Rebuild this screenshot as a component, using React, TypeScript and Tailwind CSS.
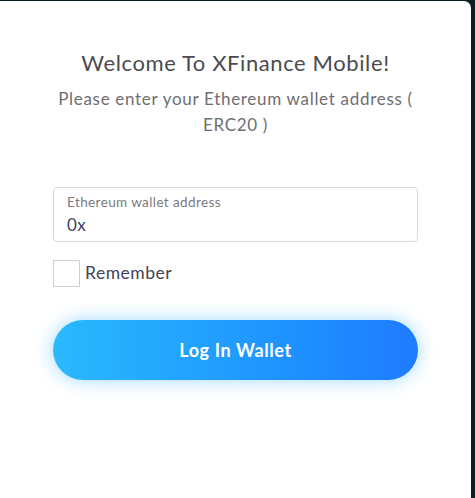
export default function App() {
  return (
    <div className="h-[498px] w-[475px] bg-[#0b1c24] pt-px">
      <div className="flex h-[497px] w-[471px] flex-col rounded-tr-[7px] bg-white px-[53px] pt-[48px] font-['Lato',sans-serif]">
        {/* Heading */}
        <h1 className="text-center text-[22px] leading-[28px] tracking-[0.6px] text-[#4b4b4f]">
          Welcome To XFinance Mobile!
        </h1>
        <p className="mt-[9px] text-center text-[17px] leading-[26px] tracking-[0.7px] text-[#6e6e72]">
          Please enter your Ethereum wallet address ( ERC20 )
        </p>

        {/* Wallet input */}
        <div className="mt-[49px] flex h-[55px] flex-col justify-center rounded-[4px] border border-[#d9d9dd] px-[13px]">
          <label className="text-[13.5px] leading-[16px] tracking-[0.4px] text-[#7a7a80]">Ethereum wallet address</label>
          <input
            defaultValue="0x"
            className="mt-[4px] w-full bg-transparent text-[17px] leading-[22px] tracking-[0.5px] text-[#3c3f5a] outline-none"
          />
        </div>

        {/* Remember */}
        <label className="mt-[18px] flex items-center gap-[5px]">
          <span className="h-[27px] w-[27px] border border-[#cfcfd3] bg-white" />
          <span className="text-[17.5px] tracking-[0.5px] text-[#3f4258]">Remember</span>
        </label>

        {/* Submit */}
        <button className="mt-[33px] h-[60px] w-full rounded-full bg-gradient-to-r from-[#2bb9fd] to-[#1f7bff] text-[18px] font-bold tracking-[0.6px] text-white shadow-[0_0_18px_rgba(40,170,255,0.45)]">
          Log In Wallet
        </button>
      </div>
    </div>
  )
}
